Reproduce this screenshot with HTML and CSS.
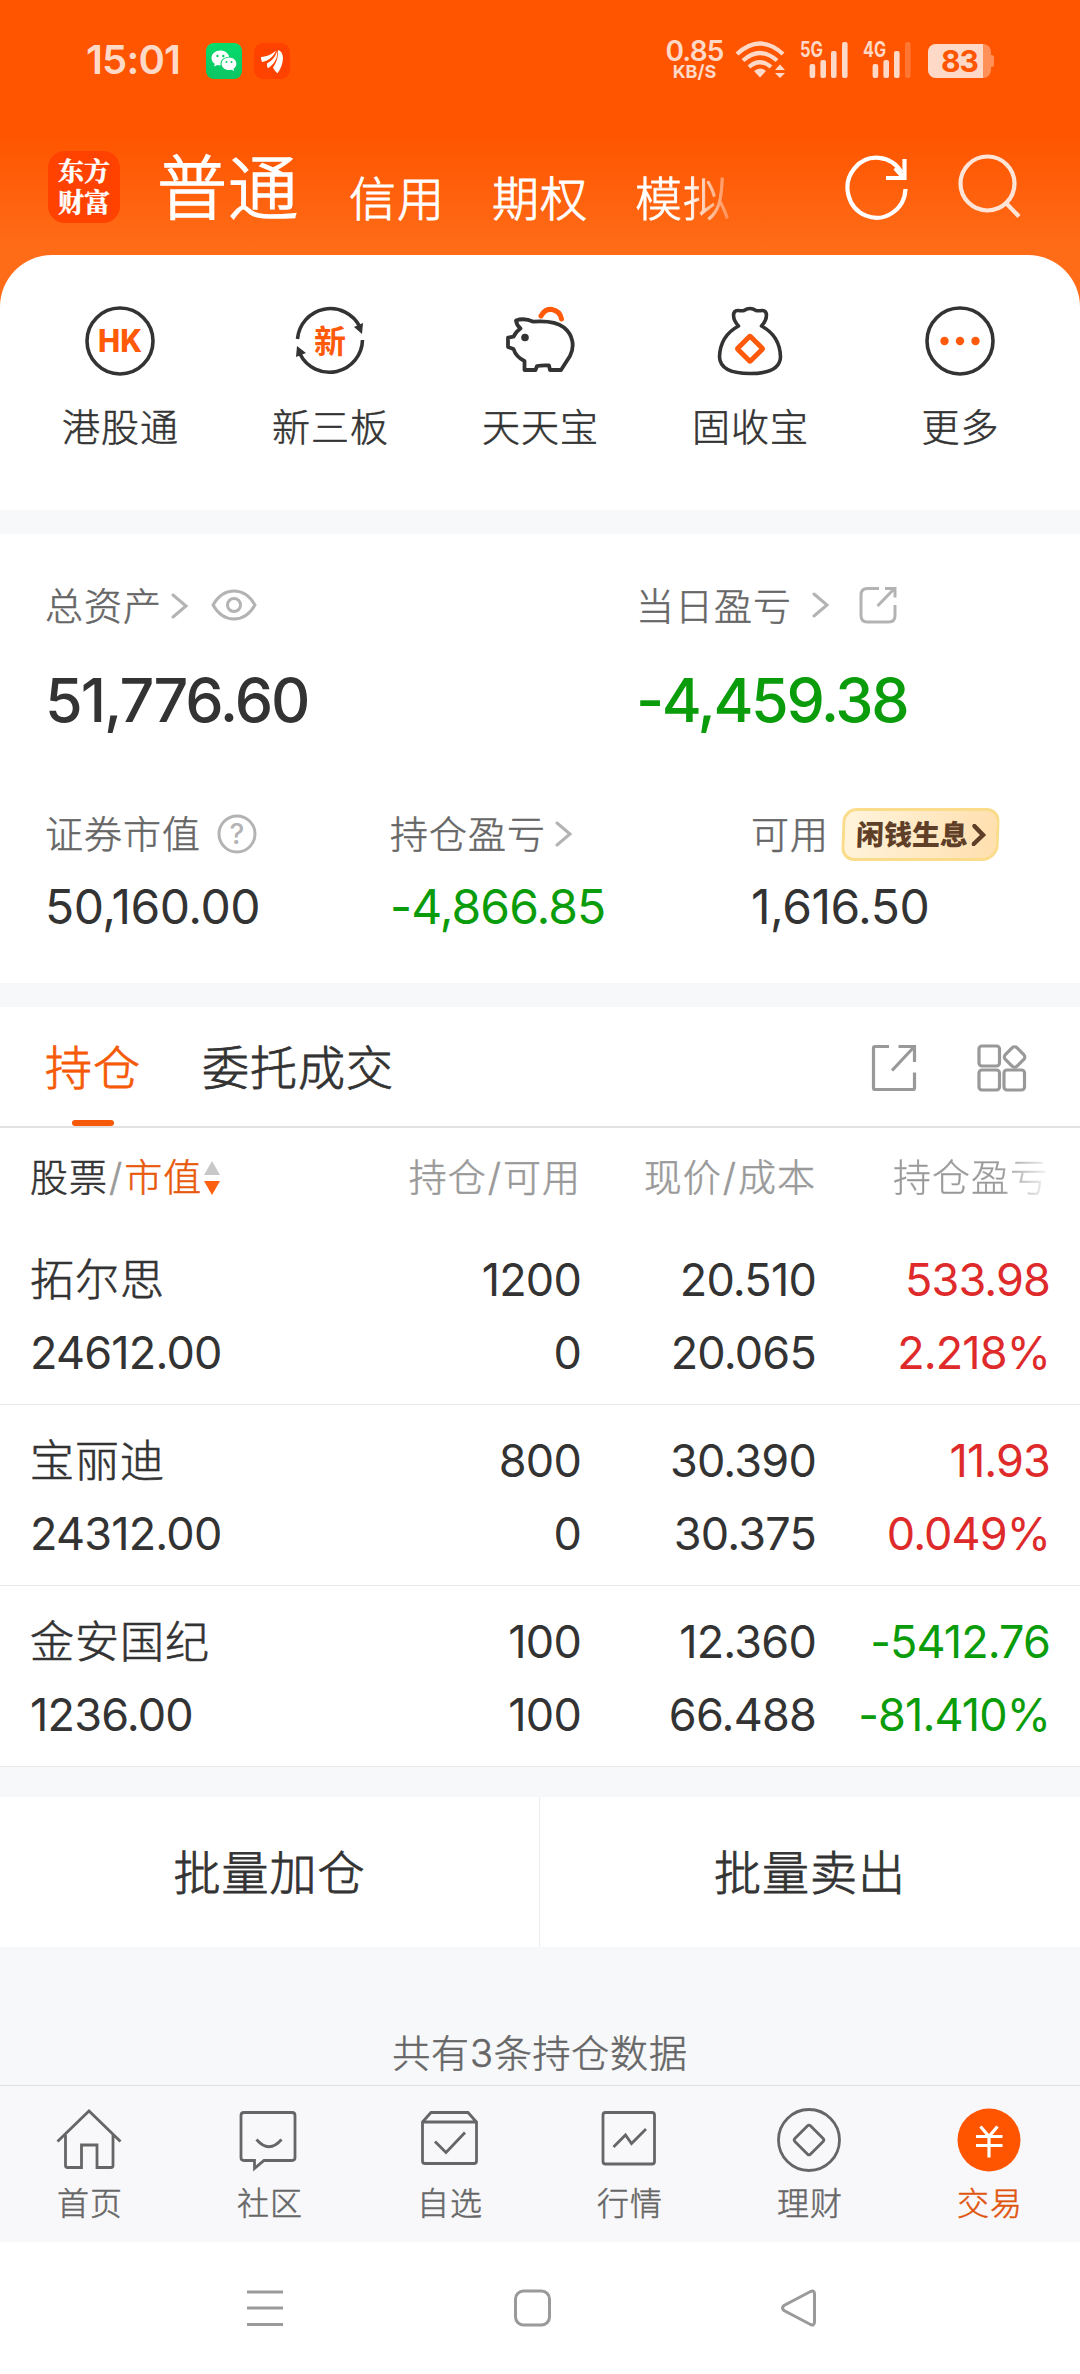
FILE: index.html
```html
<!DOCTYPE html>
<html lang="zh-CN">
<head>
<meta charset="utf-8">
<title>交易</title>
<link rel="stylesheet" href="styles.css">
</head>
<body>
<header class="top">
  <div class="status">
    <span class="time">15:01</span>
    <svg class="app-wechat" width="36" height="36" viewBox="0 0 36 36"><defs><linearGradient id="wg" x2="0" y2="1"><stop stop-color="#05dc6b"/><stop offset="1" stop-color="#0cc564"/></linearGradient></defs><rect width="36" height="36" rx="8" fill="url(#wg)"/><path fill="#fff" d="M14.5 7.5c-5 0-9 3.300-9 7.500 0 2.400 1.300 4.400 3.300 5.800l-.8 2.700 3.200-1.600c1 .3 2.200.5 3.400.5-1-5 3-8.800 8.600-8.700-.8-3.600-4.400-6.200-8.700-6.200z"/><path fill="#fff" d="M23 14.500c-4.200 0-7.400 2.800-7.400 6.300s3.200 6.300 7.400 6.300c.9 0 1.800-.1 2.600-.4l2.600 1.400-.7-2.300c1.800-1.200 2.900-3 2.900-5 0-3.500-3.200-6.300-7.400-6.300z"/><g fill="#08cf68"><circle cx="11.500" cy="13" r="1.200"/><circle cx="17.300" cy="13" r="1.200"/><circle cx="20.500" cy="19" r="1"/><circle cx="25.500" cy="19" r="1"/></g></svg>
    <svg class="app-em" width="36" height="36" viewBox="0 0 36 36"><rect width="36" height="36" rx="9" fill="#ff4200"/><g fill="#fff"><path d="M7 14c6.500-.3 11-3 15-6.500-2 5.500-6 9.500-13.800 11.500-1-1.500-1.300-3.200-1.200-5z"/><path d="M13 20.500c5.500-3.300 8.800-7.200 10.200-13 .8 7-2.200 13-9.200 17.800-.9-1.400-1.200-3.300-1-4.800z"/><path d="M19 24.500c3.800-5 5.500-11 5-17.500 3.300 1 4.700 3.700 5 8-.3 6-2 10.500-5.500 15.200-2-1.500-3.700-3.500-4.500-5.700z"/></g></svg>
    <div class="speed"><b>0.85</b><i>KB/S</i></div>
    <svg class="wifi" width="52" height="40" viewBox="0 0 52 40"><g fill="none" stroke="#ffd9c7" stroke-width="4.200"><path d="M2 14Q25 -7 48 14"/><path d="M8 20.500Q25 5.500 42 20.500"/><path d="M14 27Q25 17.500 36 27"/></g><path fill="#ffd9c7" d="M19 31q6-5 12 0l-6 6.500zM40 30l5-5.500 5 5.500zM40 33l5 5 5-5z"/></svg>
    <svg class="sig" width="52" height="50" viewBox="-2 -10 52 50"><text x="0" y="17" class="net" textLength="23" lengthAdjust="spacingAndGlyphs">5G</text><g fill="#ffd9c7"><rect x="9.600" y="24" width="5.600" height="14" rx="2"/><rect x="20.400" y="20" width="5.600" height="18" rx="2"/><rect x="31" y="11" width="5.600" height="27" rx="2"/><rect x="42" y="2" width="5.600" height="36" rx="2"/></g></svg>
    <svg class="sig" width="52" height="50" viewBox="-2 -10 52 50"><text x="0" y="17" class="net" textLength="23" lengthAdjust="spacingAndGlyphs">4G</text><g fill="#ffd9c7"><rect x="9.600" y="24" width="5.600" height="14" rx="2"/><rect x="20.400" y="20" width="5.600" height="18" rx="2"/><rect x="31" y="11" width="5.600" height="27" rx="2"/><rect x="42" y="2" width="5.600" height="36" rx="2" opacity=".25"/></g></svg>
    <svg class="batt" width="66" height="34" viewBox="0 0 66 34"><defs><clipPath id="bc"><rect width="55" height="34"/></clipPath></defs><rect width="63" height="34" rx="8" fill="#ff9058"/><rect x="61" y="11" width="5" height="12" rx="2.500" fill="#ff9058"/><rect width="63" height="34" rx="8" fill="#ffd9c7" clip-path="url(#bc)"/><text x="31.500" y="28" class="pct" text-anchor="middle">83</text></svg>
  </div>
  <nav class="accounts">
    <div class="logo"><span>东方</span><span>财富</span></div>
    <span class="acc acc-on">普通</span>
    <span class="acc">信用</span>
    <span class="acc">期权</span>
    <span class="acc acc-fade">模拟</span>
    <svg class="refresh" width="64" height="66" viewBox="0 0 64 66" fill="none" stroke="#fff" stroke-width="4.200"><path d="M60.500 34a29 30 0 1 1-4-16.500"/><path d="M59.500 4v19H41M58 22L50 13"/></svg>
    <svg class="search" width="64" height="66" viewBox="0 0 64 66" fill="none" stroke="#ffe5d8" stroke-width="4.200"><circle cx="29.500" cy="30.500" r="27"/><path d="M48 50l13 13.500"/></svg>
  </nav>
</header>

<section class="quick">
  <a class="q"><svg width="72" height="72" viewBox="0 0 72 72"><circle cx="36" cy="36" r="33" fill="none" stroke="#333" stroke-width="3.600"/><text x="36" y="47" class="hk" text-anchor="middle" textLength="44" lengthAdjust="spacingAndGlyphs">HK</text></svg><span>港股通</span></a>
  <a class="q"><svg width="72" height="72" viewBox="0 0 72 72"><g fill="none" stroke="#333" stroke-width="3.600"><path d="M3.500 34A33 33 0 0 1 66 22"/><path d="M68.500 35A33 33 0 0 1 6 49"/></g><path fill="#333" d="M60 22l9-4-1 11zM3 41l9 7-10 4z"/><text x="36" y="47.500" class="xin" text-anchor="middle">新</text></svg><span>新三板</span></a>
  <a class="q"><svg width="72" height="72" viewBox="0 0 72 72" fill="none"><path stroke="#ff5a0a" stroke-width="5" stroke-linecap="round" d="M37 11Q41 3.500 48 4.500Q56 6 57.500 14"/><path stroke="#333" stroke-width="3.800" stroke-linejoin="round" d="M12 15.500Q20 12.500 29.500 16.700C46 15.500 54 18 60 22.500C69 30 71 41 66 51L57 65H46L45 60.500Q39 60 33 61L31.500 65H20.500V56Q12 52 9.500 44L4 42V32.700L9.500 31.700Q11.500 27 16.500 23.500Q12.500 20 12 15.500z"/><circle cx="21" cy="32.500" r="3.800" fill="#333"/></svg><span>天天宝</span></a>
  <a class="q"><svg width="72" height="72" viewBox="0 0 72 72" fill="none" stroke-linejoin="round"><path stroke="#333" stroke-width="3.600" d="M24.500 21C18 14 18 5 24 5.500Q28 6 30 5.500Q36 1.500 42 5.500Q44 6 48 5.500C54 5 54 14 47.500 21Q66 31 66.500 52C66 64 53 68.500 36 68.500S6 64 5.500 52Q6 31 24.500 21z"/><rect x="27" y="34.700" width="18" height="18" rx="1" stroke="#ff5a0a" stroke-width="5" transform="rotate(45 36 43.700)"/></svg><span>固收宝</span></a>
  <a class="q"><svg width="72" height="72" viewBox="0 0 72 72"><circle cx="36" cy="36" r="33" fill="none" stroke="#333" stroke-width="3.600"/><g fill="#ff5a0a"><circle cx="20.500" cy="36" r="4.200"/><circle cx="36" cy="36" r="4.200"/><circle cx="51.500" cy="36" r="4.200"/></g></svg><span>更多</span></a>
</section>

<section class="assets">
  <div class="a-row a-main">
    <div class="a-cell">
      <div class="lab">总资产<svg class="chev" width="18" height="26" viewBox="0 0 18 26"><path d="M2 2l13 11-13 11"/></svg><svg class="eye" width="46" height="32" viewBox="0 0 46 32"><path d="M2 16Q10 2 23 2T44 16Q36 30 23 30T2 16z"/><circle cx="23" cy="16" r="6.500"/></svg></div>
      <div class="val val-lg">51,776.60</div>
    </div>
    <div class="a-cell">
      <div class="lab">当日盈亏<svg class="chev chev-far" width="18" height="26" viewBox="0 0 18 26"><path d="M2 2l13 11-13 11"/></svg><svg class="share" width="38" height="38" viewBox="0 0 38 38"><path d="M20 2.500H8.500Q2 2.500 2 9v20.500q0 6.500 6.500 6.500h21q6.500 0 6.500-6.500V19M26 2.500h10v9M35 3L18.500 20"/></svg></div>
      <div class="val val-lg val-day green">-4,459.38</div>
    </div>
  </div>
  <div class="a-row a-sub">
    <div class="a-cell">
      <div class="lab">证券市值<svg class="help" width="40" height="40" viewBox="0 0 40 40"><circle cx="20" cy="20" r="18"/><text x="20" y="30" text-anchor="middle">?</text></svg></div>
      <div class="val">50,160.00</div>
    </div>
    <div class="a-cell">
      <div class="lab">持仓盈亏<svg class="chev" width="18" height="26" viewBox="0 0 18 26"><path d="M2 2l13 11-13 11"/></svg></div>
      <div class="val val-pos green">-4,866.85</div>
    </div>
    <div class="a-cell">
      <div class="lab">可用<span class="badge">闲钱生息<svg width="14" height="22" viewBox="0 0 14 22"><path d="M2 2l9 9-9 9"/></svg></span></div>
      <div class="val">1,616.50</div>
    </div>
  </div>
</section>

<section class="holdings">
  <nav class="tabs">
    <span class="tab tab-on">持仓</span>
    <span class="tab">委托成交</span>
    <svg class="t-share" width="46" height="48" viewBox="0 0 46 48"><path d="M18 2.500H4q-1.500 0-1.500 1.500v40q0 1.500 1.500 1.500h38q1.500 0 1.500-1.500V28.500M27.500 2.500h16V18M43 3L21 26.500"/></svg>
    <svg class="t-grid" width="50" height="48" viewBox="0 0 50 48"><rect x="2" y="2" width="20.500" height="20" rx="3"/><rect x="2" y="26" width="20.500" height="20" rx="3"/><rect x="27" y="26" width="20.500" height="20" rx="3"/><rect x="29.300" y="4.700" width="16.500" height="16.500" rx="3.500" transform="rotate(45 37.500 13)"/></svg>
  </nav>
  <div class="grid head">
    <div class="c1"><span class="dark">股票</span><span class="slash">/</span><span class="orange">市值</span><svg width="16" height="36" viewBox="0 0 16 36"><path fill="#c8c8c8" d="M8 1l8 14H0z"/><path fill="#ff6010" d="M8 35l8-14H0z"/></svg></div>
    <div>持仓<span class="slash">/</span>可用</div><div>现价<span class="slash">/</span>成本</div><div class="fade">持仓盈亏</div>
  </div>
  <div class="grid row">
    <div class="c1 name">拓尔思</div><div>1200</div><div>20.510</div><div class="pl red">533.98</div>
    <div class="c1">24612.00</div><div>0</div><div>20.065</div><div class="pl red">2.218%</div>
  </div>
  <div class="grid row">
    <div class="c1 name">宝丽迪</div><div>800</div><div>30.390</div><div class="pl red">11.93</div>
    <div class="c1">24312.00</div><div>0</div><div>30.375</div><div class="pl red">0.049%</div>
  </div>
  <div class="grid row">
    <div class="c1 name">金安国纪</div><div>100</div><div>12.360</div><div class="pl green">-5412.76</div>
    <div class="c1">1236.00</div><div>100</div><div>66.488</div><div class="pl green">-81.410%</div>
  </div>
</section>

<div class="batch"><a>批量加仓</a><a>批量卖出</a></div>
<p class="total">共有3条持仓数据</p>

<nav class="bottom">
  <a><svg width="66" height="66" viewBox="0 0 66 66"><path d="M1.500 34.500L33 4l31.500 30.500M9.500 28v30.500q0 2 2 2H25.500V38H41v22.500H55q2 0 2-2V28"/></svg>首页</a>
  <a><svg width="66" height="66" viewBox="0 0 66 66"><path d="M8 5.500h48q3 0 3 3v42q0 3-3 3H28l-9.500 8v-8H8q-3 0-3-3v-42q0-3 3-3zM20.500 32.500Q33 47 45.500 32.500"/></svg>社区</a>
  <a><svg width="66" height="66" viewBox="0 0 66 66"><path d="M6.500 15l8.500-9.500h37L60.500 15v39q0 2.500-2.500 2.500H9q-2.500 0-2.500-2.500zM6.500 15h54M19 34.500L30 45.500 49 25.500"/></svg>自选</a>
  <a><svg width="66" height="66" viewBox="0 0 66 66"><rect x="7" y="5.500" width="51.500" height="51.500" rx="2.500"/><path d="M17.500 40L29.500 28l6 8.500L50 22"/></svg>行情</a>
  <a><svg width="66" height="66" viewBox="0 0 66 66"><circle cx="33" cy="33" r="30.500"/><rect x="22" y="22" width="22" height="22" rx="2" transform="rotate(45 33 33)"/></svg>理财</a>
  <a class="on"><svg width="66" height="66" viewBox="0 0 66 66"><circle cx="33" cy="33" r="31.500" class="disc"/><path class="yen" d="M24.500 19.500L33 29.500l8.500-10M20 29.500h26.500M20 38.500h26.500M33 29.500v21"/></svg>交易</a>
</nav>
<div class="sysnav">
  <svg width="38" height="38" viewBox="0 0 38 38"><path d="M1 3h36M1 19h36M1 35.500h36"/></svg>
  <svg width="38" height="38" viewBox="0 0 38 38"><rect x="2.500" y="2" width="34" height="34" rx="8"/></svg>
  <svg width="38" height="38" viewBox="0 0 38 38"><path d="M34.500 5v28q0 4-4 2.500L4 21.500q-3-2.500 0-5L30.500 2.500q4-1.500 4 2.500z"/></svg>
</div>
</body>
</html>
```
FILE: styles.css
```css
* { box-sizing: border-box; }
body {
  margin: 0;
  width: 1080px;
  height: 2374px;
  overflow: hidden;
  background: #f7f8fa;
  color: #333;
  font: 300 39px/1 Inter, "Noto Sans CJK SC", sans-serif;
  -webkit-text-stroke: 0.5px;
  display: flex;
  flex-direction: column;
}
svg { display: block; flex: none; -webkit-text-stroke: 0; }
.green { color: #0a9c0a; }
.red { color: #de2a2a; }
.orange { color: #e8590c; }
.dark { color: #333; }

/* header */
.top {
  height: 310px;
  margin-bottom: -55px;
  flex: none;
  background: linear-gradient(#ff5500 0, #ff5500 135px, #ff6c18 250px, #ff6c18);
}
.status {
  height: 120px;
  padding: 39px 0 0 86px;
  display: flex;
  align-items: flex-start;
  color: #ffd9c7;
  -webkit-text-stroke: 0;
}
.time { width: 120px; margin-top: 1px; font-size: 40px; font-weight: 600; letter-spacing: -0.8px; }
.app-wechat { margin-top: 4px; }
.app-em { margin: 4px 0 0 12px; }
.speed { width: 61px; margin: 0 0 0 374px; display: flex; flex-direction: column; align-items: center; }
.speed b { font-size: 28px; line-height: 24px; font-weight: 600; letter-spacing: -0.8px; }
.speed i { font-size: 18px; line-height: 18px; font-weight: 700; font-style: normal; }
.wifi { margin: 1px 0 0 10px; }
.sig { margin: -9px 0 0 11px; }
.net { font: 700 21px Inter; fill: #ffd9c7; }
.batt { margin: 5px 0 0 15px; }
.pct { font: 700 30px Inter; letter-spacing: -1px; fill: #ff5500; }

.accounts { display: flex; padding: 31px 0 0 48px; height: 135px; color: #fff; }
.logo {
  width: 72px; height: 72px; padding-top: 8px;
  border-radius: 17px; background: #ff4200;
  display: flex; flex-direction: column; align-items: center; gap: 4px;
  font: 700 26px/27px "Liberation Serif", "Noto Serif CJK SC", "Noto Sans CJK SC", serif;
}
.acc { font-size: 47px; letter-spacing: 1px; margin: 24px 0 0 47px; -webkit-text-stroke: 0.9px; }
.acc-on { font-size: 70px; margin: 3px 3px 0 37px; -webkit-text-stroke: 1.600px; }
.acc-fade {
  background: linear-gradient(90deg, #fff 55%, #ffffff40 100%);
  -webkit-background-clip: text; background-clip: text; color: transparent;
}
.refresh { margin: 4px 0 0 114px; }
.search { margin: 2px 0 0 49px; }

/* quick entries */
.quick {
  flex: none; height: 255px; padding: 50px 15px 0;
  border-radius: 52px 52px 0 0; background: #fff;
  display: grid; grid-template-columns: repeat(5, 1fr);
}
.q { display: flex; flex-direction: column; align-items: center; gap: 31px; }
.q span { font-size: 38px; letter-spacing: 1px; margin-left: 1px; }
.hk { font: 800 31px Inter; fill: #ff5a0a; }
.xin { font: 700 32px "Noto Sans CJK SC"; fill: #ff5a0a; }

/* assets */
.assets { flex: none; height: 449px; margin-top: 24px; padding: 49px 0 0 45px; background: #fff; }
.a-row { display: flex; }
.a-cell { flex: none; }
.a-main .a-cell { width: 591px; }
.a-main .a-cell + .a-cell { width: 400px; }
.a-sub { margin-top: 80px; }
.a-sub .a-cell { width: 345px; }
.a-sub .a-cell:nth-child(2) { width: 361px; }
.a-sub .a-cell:nth-child(3) { width: 300px; }
.lab { display: flex; align-items: center; height: 46px; color: #666; font-size: 38px; letter-spacing: 1px; }
.lab svg { fill: none; stroke: #b3b3b3; stroke-width: 3; stroke-linecap: round; }
.chev { margin-left: 9px; }
.chev-far { margin: -2px 0 0 20px; }
.eye { margin: -3px 0 0 22px; }
.lab .share { margin: -2px 0 0 29px; stroke-linecap: butt; }
.lab .help { margin-left: 16px; }
.lab .help text { fill: #b3b3b3; stroke: none; font: 500 28px Inter; letter-spacing: 0; }
.val { margin-top: 26px; font-size: 48px; font-weight: 380; letter-spacing: -0.500px; -webkit-text-stroke: 0; }
.val-pos { letter-spacing: -0.900px; }
.val-lg { margin-top: 41px; font-size: 61px; font-weight: 500; letter-spacing: -2px; }
.val-day { letter-spacing: -2.400px; }
.badge {
  width: 157px; height: 53px; margin-left: 13px; padding-left: 11px;
  display: flex; align-items: center; gap: 4px;
  border: 3px solid #fbdc8b; border-radius: 14px 13px 16px 13px;
  background: linear-gradient(100deg, #fff4dc, #ffdfae);
  transform: skewX(-2deg);
  color: #5f3f28; font-size: 28px; font-weight: 800; letter-spacing: 0; white-space: nowrap;
  -webkit-text-stroke: 0;
}
.badge svg { stroke: #5f3f28; stroke-width: 4.500; }

/* holdings */
.holdings { flex: none; margin-top: 24px; background: #fff; }
.tabs { display: flex; height: 121px; padding: 2px 53px 0 45px; align-items: center; border-bottom: 2px solid #e2e2e2; }
.tab { position: relative; font-size: 47px; letter-spacing: 1px; margin-right: 61px; -webkit-text-stroke: 0.8px; }
.tab-on { color: #f65a08; }
.tab-on::after {
  content: ""; position: absolute; left: 27px; bottom: -35px;
  width: 42px; height: 6px; border-radius: 3px; background: #f65a08;
}
.tabs svg { fill: none; stroke: #999; stroke-width: 3.200; }
.t-share { margin-left: auto; }
.t-grid { margin-left: 60px; }
.grid { display: grid; grid-template-columns: 301px 250px 235px 233px; padding-left: 30px; text-align: right; }
.grid .c1 { text-align: left; }
.head { height: 96px; padding-top: 1px; align-items: center; color: #999; font-size: 38px; letter-spacing: 1px; }
.head .c1 { display: flex; align-items: center; }
.head .c1 svg { margin: 2px 0 0 2px; }
.slash { margin: 0 1px; }
.fade {
  background: linear-gradient(90deg, #999 0, #999 79%, #99999918 100%);
  -webkit-background-clip: text; background-clip: text; color: transparent;
  -webkit-text-stroke: 0.3px transparent;
}
.row {
  height: 181px; padding-top: 19px; grid-template-rows: 73px 73px; align-items: center;
  border-bottom: 1px solid #e8e8e8;
  font-size: 45px; font-weight: 380; letter-spacing: -0.800px; -webkit-text-stroke: 0;
}
.row .name { font-size: 44px; font-weight: 300; letter-spacing: 1px; -webkit-text-stroke: 0.6px; }
.row .pl { letter-spacing: -0.900px; margin-right: -1px; }

.batch { flex: none; display: flex; height: 150px; margin-top: 30px; background: #fff; }
.batch a { width: 539px; display: flex; align-items: center; justify-content: center; font-size: 47px; letter-spacing: 1px; -webkit-text-stroke: 0.8px; }
.batch a + a { width: 541px; border-left: 1px solid #ececec; }
.total { flex: none; margin: 0; height: 138px; padding-top: 87px; text-align: center; color: #666; font-size: 38px; letter-spacing: 0.8px; }

.bottom {
  flex: none; height: 157px; padding-top: 21px; border-top: 1px solid #dfe0e2;
  display: grid; grid-template-columns: repeat(6, 1fr); background: #f8f8fa; color: #666;
}
.bottom a { display: flex; flex-direction: column; align-items: center; gap: 15px; font-size: 32px; letter-spacing: 1px; }
.bottom svg { fill: none; stroke: #666; stroke-width: 2.800; margin-right: 2px; }
.bottom .on { color: #e0560f; }
.bottom .disc { fill: #ff5500; stroke: none; }
.bottom .yen { stroke: #fff; stroke-width: 3.200; }
.sysnav { flex: 1; background: #fff; display: flex; justify-content: space-between; padding: 47px 262px 0 246px; }
.sysnav svg { fill: none; stroke: #9a9a9a; stroke-width: 3; }
```
